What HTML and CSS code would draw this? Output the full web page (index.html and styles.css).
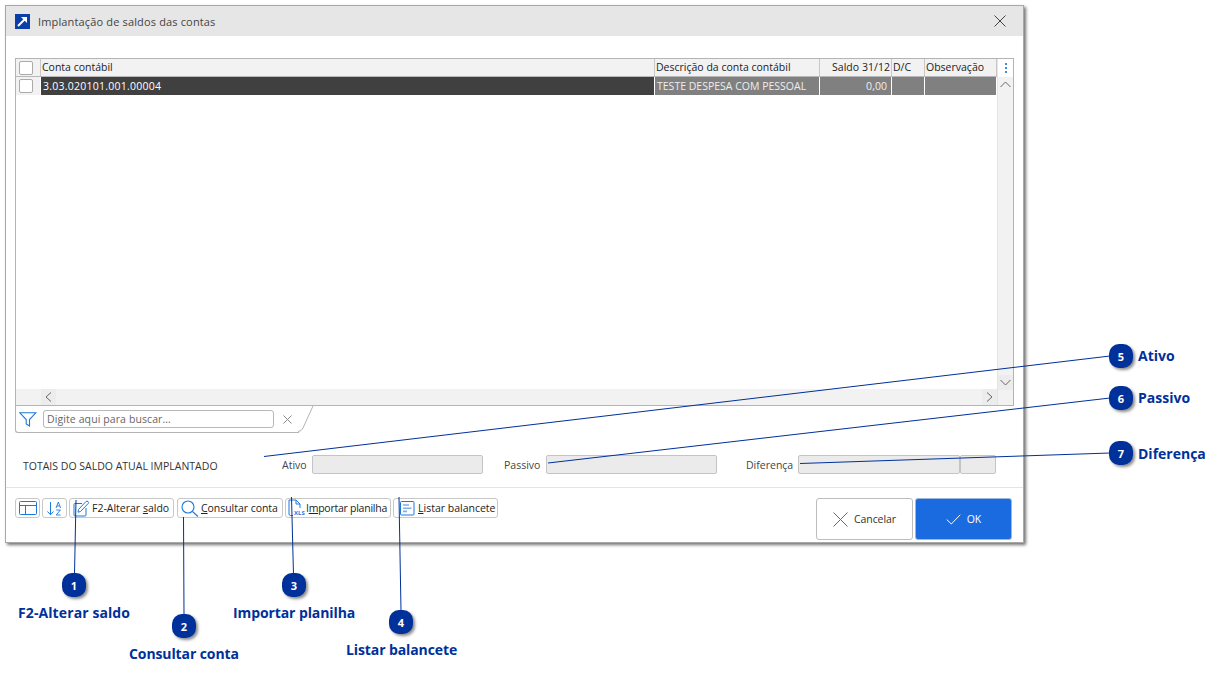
FILE: index.html
```html
<!DOCTYPE html>
<html lang="pt-BR">
<head>
<meta charset="utf-8">
<title>Implantação de saldos das contas</title>
<link rel="stylesheet" href="styles.css">
</head>
<body>
<div class="stage">
  <section class="dialog">
    <header class="titlebar">
      <svg class="app-icon" width="15" height="15" viewBox="0 0 15 15"><rect width="15" height="15" fill="#0a3ea8"/><path d="M3 12 L10 5" stroke="#fff" stroke-width="2" fill="none"/><path d="M6 3 H12 V9 Z" fill="#fff"/></svg>
      <span class="title">Implantação de saldos das contas</span>
      <svg class="close" width="12" height="12" viewBox="0 0 12 12"><path d="M.5 .5 L11.5 11.5 M11.5 .5 L.5 11.5" stroke="#444" stroke-width="1" fill="none"/></svg>
    </header>

    <div class="grid">
      <div class="grid-main">
        <div class="table">
          <div class="row head">
            <div class="cell c-check"><span class="box"></span></div>
            <div class="cell c-conta">Conta contábil</div>
            <div class="cell c-desc">Descrição da conta contábil</div>
            <div class="cell c-saldo">Saldo 31/12</div>
            <div class="cell c-dc">D/C</div>
            <div class="cell c-obs">Observação</div>
          </div>
          <div class="row body-row">
            <div class="cell c-check"><span class="box"></span></div>
            <div class="cell c-conta selected">3.03.020101.001.00004</div>
            <div class="cell c-desc muted">TESTE DESPESA COM PESSOAL</div>
            <div class="cell c-saldo muted num">0,00</div>
            <div class="cell c-dc muted"></div>
            <div class="cell c-obs muted"></div>
          </div>
          <div class="table-fill"></div>
          <div class="hscroll">
            <span class="h-btn left"><svg width="7" height="10" viewBox="0 0 7 10"><path d="M6 .5 L1 5 L6 9.5" stroke="#666" fill="none"/></svg></span>
            <span class="h-btn right"><svg width="7" height="10" viewBox="0 0 7 10"><path d="M1 .5 L6 5 L1 9.5" stroke="#666" fill="none"/></svg></span>
          </div>
        </div>
        <div class="vscroll">
          <div class="dots"><i></i><i></i><i></i></div>
          <span class="v-btn"><svg width="11" height="7" viewBox="0 0 11 7"><path d="M.5 6 L5.5 1 L10.5 6" stroke="#666" fill="none"/></svg></span>
          <span class="v-btn bottom"><svg width="11" height="7" viewBox="0 0 11 7"><path d="M.5 1 L5.5 6 L10.5 1" stroke="#666" fill="none"/></svg></span>
        </div>
      </div>
      <div class="searchbar">
        <div class="search-tab">
          <svg class="funnel" width="18" height="15" viewBox="0 0 18 15"><path d="M.8 .8 H16.8 L10.5 7.5 V14 L7.2 12 V7.5 Z" stroke="#1e78dc" stroke-width="1.1" fill="none"/></svg>
          <div class="search-input">Digite aqui para buscar…</div>
          <svg class="clear" width="9" height="9" viewBox="0 0 9 9"><path d="M.5 .5 L8.5 8.5 M8.5 .5 L.5 8.5" stroke="#888" fill="none"/></svg>
          <svg class="tab-edge" width="16" height="26" viewBox="0 0 16 26"><path d="M15 0 L5 22 Q3.5 25.5 0 25.5" stroke="#b4b4b4" fill="#fff"/></svg>
        </div>
      </div>
    </div>

    <div class="totals">
      <span class="totals-title">TOTAIS DO SALDO ATUAL IMPLANTADO</span>
      <label class="field-label l-ativo">Ativo</label>
      <div class="field f-ativo"></div>
      <label class="field-label l-passivo">Passivo</label>
      <div class="field f-passivo"></div>
      <label class="field-label l-dif">Diferença</label>
      <div class="field f-dif"></div>
      <div class="field f-dc"></div>
    </div>

    <footer class="footer">
      <div class="tools">
        <button class="tool icon-only"><svg width="18" height="14" viewBox="0 0 18 14"><rect x=".5" y=".5" width="17" height="13" rx="1" stroke="#1e78dc" fill="none"/><path d="M.5 4.500 H17.500 M6.500 4.500 V13.500" stroke="#1e78dc" fill="none"/></svg></button>
        <button class="tool icon-only"><svg width="18" height="15" viewBox="0 0 18 15"><path d="M4.500 1 V13.500 M1.500 10.500 L4.500 13.800 L7.500 10.500" stroke="#1e78dc" fill="none"/><path d="M10 7 L12.300 1 L14.600 7 M10.900 5 H13.700" stroke="#1e78dc" stroke-width=".9" fill="none"/><path d="M10.200 9 H14.400 L10.200 14 H14.600" stroke="#1e78dc" stroke-width=".9" fill="none"/></svg></button>
        <button class="tool t-f2"><svg width="17" height="17" viewBox="0 0 17 17"><path d="M9 3.500 H2 Q1 3.500 1 4.500 V15 Q1 16 2 16 H12 Q13 16 13 15 V8" stroke="#1e78dc" fill="none"/><path d="M5.500 9.500 L13 1.500 Q14 .7 15 1.500 Q16 2.500 15.200 3.500 L7.500 11.500 L5 12.200 Z" stroke="#1e78dc" fill="none"/></svg><span>F2-Alterar <u>s</u>aldo</span></button>
        <button class="tool t-consult"><svg width="18" height="17" viewBox="0 0 18 17"><circle cx="7" cy="7" r="6" stroke="#1e78dc" stroke-width="1.1" fill="none"/><path d="M11.500 11.500 L17 16.500" stroke="#1e78dc" stroke-width="1.1"/></svg><span><u>C</u>onsultar conta</span></button>
        <button class="tool t-import"><svg width="13" height="18" viewBox="0 0 13 18"><path d="M1 15 V1 H8 L12 5 V9 M8 1 V5 H12" stroke="#1e78dc" fill="none"/><path d="M1 15 Q1 16.500 2.500 16.500 H5" stroke="#1e78dc" fill="none"/></svg><span class="xls">XLS</span><span class="import-text">I<u>m</u>portar planilha</span></button>
        <button class="tool t-list"><svg width="15" height="15" viewBox="0 0 15 15"><rect x=".5" y=".5" width="13.500" height="13.500" rx="1" stroke="#1e78dc" fill="none"/><path d="M3 4 H9 M3 7.200 H11.500 M3 10.400 H7" stroke="#7fb0ea" stroke-width="1.600"/></svg><span><u>L</u>istar balancete</span></button>
      </div>
      <div class="actions">
        <button class="action cancel"><svg width="15" height="15" viewBox="0 0 15 15"><path d="M.5 .5 L14.500 14.500 M14.500 .5 L.5 14.500" stroke="#1e78dc" fill="none"/></svg>Cancelar</button>
        <button class="action ok"><svg width="15" height="11" viewBox="0 0 15 11"><path d="M.7 5.500 L5.300 10 L14.300 .7" stroke="#fff" fill="none"/></svg>OK</button>
      </div>
    </footer>
  </section>

  <svg class="leaders" width="1222" height="680" viewBox="0 0 1222 680">
    <g stroke="#00309a" stroke-width="1" fill="none">
      <path d="M76 500 L74.500 574"/>
      <path d="M183.500 517 L184 615"/>
      <path d="M291.500 497 L293.500 575"/>
      <path d="M399 497 L401 611"/>
      <path d="M264 456.500 L1110 356"/>
      <path d="M548 463 L1110 398"/>
      <path d="M800 463.500 L1110 453"/>
    </g>
  </svg>

  <span class="badge b1">1</span><span class="callout t1">F2-Alterar saldo</span>
  <span class="badge b2">2</span><span class="callout t2">Consultar conta</span>
  <span class="badge b3">3</span><span class="callout t3">Importar planilha</span>
  <span class="badge b4">4</span><span class="callout t4">Listar balancete</span>
  <span class="badge b5">5</span><span class="callout t5">Ativo</span>
  <span class="badge b6">6</span><span class="callout t6">Passivo</span>
  <span class="badge b7">7</span><span class="callout t7">Diferença</span>
</div>
</body>
</html>
```

FILE: styles.css
```css
* { box-sizing: border-box; }
html, body { margin: 0; padding: 0; background: #fff; }
body { font-family: "Open Sans", "Noto Sans", "Liberation Sans", sans-serif; font-size: 10.5px; color: #222; }
svg { flex: none; }
.stage { position: relative; width: 1222px; height: 680px; overflow: hidden; padding: 5px 0 0 5px; }

.dialog { width: 1019px; height: 538px; background: #fff; border: 1px solid #a8a8a8; box-shadow: 2px 2px 3px rgba(0,0,0,.55); display: flex; flex-direction: column; }
.titlebar { height: 30px; flex: none; background: #e6e6e6; display: flex; align-items: center; padding: 0 17px 0 9px; }
.title { margin-left: 8px; flex: 1; font-size: 11px; color: #444; letter-spacing: .15px; }

.grid { margin: 22px 10px 0 9px; width: 999px; height: 375px; flex: none; display: flex; flex-direction: column; }
.grid-main { flex: 1; display: flex; border: 1px solid #b4b4b4; min-height: 0; }
.table { flex: 1; display: flex; flex-direction: column; min-width: 0; }
.row { display: flex; flex: none; }
.head { height: 18px; background: #f2f2f2; border-bottom: 1px solid #b8b8b8; }
.body-row { height: 18px; }
.cell { display: flex; align-items: center; padding: 0 1px; border-right: 1px solid #fff; white-space: nowrap; color: #222; }
.head .cell { border-right: 1px solid #c8c8c8; padding-bottom: 1px; }
.c-check { width: 25px; justify-content: flex-start; background: #f2f2f2; padding: 0 0 0 3px; }
.head .c-check { padding: 0 0 0 3px; }
.c-conta { width: 614px; }
.c-desc { width: 165px; }
.c-saldo { width: 72px; justify-content: flex-end; letter-spacing: .04px; }
.c-dc { width: 33px; }
.c-obs { flex: 1; }
.box { width: 14px; height: 14px; background: #fff; border: 1px solid #aaa; border-radius: 2px; }
.selected { background: #404040; color: #fff; padding-left: 2px; letter-spacing: .25px; }
.body-row .c-desc { padding-left: 2px; }
.muted { background: #808080; color: #eee; }
.num { padding-right: 4px; }
.table-fill { flex: 1; }
.hscroll { height: 16px; flex: none; background: #f2f2f2; display: flex; justify-content: space-between; padding: 0 0 0 25px; }
.h-btn { width: 15px; display: flex; align-items: center; justify-content: center; background: #ececec; }
.vscroll { width: 16px; flex: none; background: #f2f2f2; display: flex; flex-direction: column; border-left: 1px solid #e4e4e4; }
.dots { height: 18px; flex: none; background: #fff; display: flex; flex-direction: column; align-items: center; justify-content: center; gap: 2px; }
.dots i { width: 2px; height: 2px; background: #3f8be0; display: block; }
.v-btn { height: 15px; flex: none; display: flex; align-items: center; justify-content: center; background: #f2f2f2; }
.v-btn.bottom { margin-top: auto; margin-bottom: 15px; background: #ececec; }

.searchbar { height: 27px; flex: none; }
.search-tab { position: relative; width: 284px; height: 27px; border-left: 1px solid #b4b4b4; border-bottom: 1px solid #b4b4b4; border-bottom-left-radius: 3px; display: flex; align-items: center; padding-left: 3px; }
.search-input { margin-left: 6px; width: 231px; height: 18px; border: 1px solid #b8b8b8; border-radius: 3px; padding-left: 3px; color: #666; line-height: 16px; letter-spacing: .1px; }
.clear { margin-left: 9px; }
.tab-edge { position: absolute; right: -15px; top: 0; }

.totals { flex: none; height: 55px; display: flex; align-items: flex-start; padding: 22px 0 0 17px; position: relative; border-bottom: 1px solid #e4e4e4; }
.totals-title { width: 259px; padding-top: 4px; color: #333; white-space: nowrap; font-size: 10.5px; }
.field-label { color: #444; padding-top: 3px; white-space: nowrap; }
.field { height: 19px; background: #ebebeb; border: 1px solid #c4c4c4; border-radius: 2px; flex: none; }
.l-ativo { width: 30px; }
.f-ativo { width: 171px; }
.l-passivo { width: 42px; margin-left: 21px; }
.f-passivo { width: 171px; }
.l-dif { width: 52px; margin-left: 29px; }
.f-dif { width: 162px; }
.f-dc { width: 36px; }

.footer { flex: 1; display: flex; justify-content: space-between; align-items: flex-start; padding: 10px 11px 0 9px; }
.tools { display: flex; gap: 2px; }
.tool { height: 20px; flex: none; display: flex; align-items: center; gap: 2px; background: #fff; border: 1px solid #c8c8c8; border-radius: 3px; padding: 0 3px; font: inherit; color: #222; white-space: nowrap; }
.icon-only { width: 25px; justify-content: center; padding: 0; }
.t-f2 { width: 105px; }
.t-consult { width: 106px; margin-left: 1px; gap: 2px; letter-spacing: -.04px; }
.t-import { width: 106px; position: relative; gap: 5px; padding-left: 2px; }
.import-text { letter-spacing: -.25px; }
.t-list { width: 105px; gap: 3px; padding-left: 6px; }
.xls { position: absolute; left: 8px; top: 11px; font-size: 6px; font-weight: 700; color: #1e78dc; background: #fff; line-height: 7px; }
.actions { display: flex; gap: 2px; }
.action { width: 97px; height: 42px; display: flex; align-items: center; justify-content: center; gap: 6px; border-radius: 3px; font: inherit; }
.cancel { background: #fff; border: 1px solid #bdbdbd; color: #333; letter-spacing: -.05px; }
.ok { background: #1a6be0; border: 1px solid #9db8dc; color: #fff; }

.leaders { position: absolute; left: 0; top: 0; pointer-events: none; }
.badge { position: absolute; width: 24px; height: 24px; border-radius: 10px; background: #00309a; color: #fff; font-size: 11px; font-weight: 700; display: flex; align-items: center; justify-content: center; box-shadow: 2px 2px 3px rgba(0,0,0,.45); }
.b1 { left: 62px; top: 573px; }
.b2 { left: 172px; top: 614px; }
.b3 { left: 282px; top: 573px; }
.b4 { left: 389px; top: 610px; }
.b5 { left: 1109px; top: 344px; }
.b6 { left: 1109px; top: 386px; }
.b7 { left: 1109px; top: 441px; }
.callout { position: absolute; color: #00309a; font-size: 14px; font-weight: 700; line-height: 18px; white-space: nowrap; }
.t1 { left: 18px; top: 604px; letter-spacing: .1px; }
.t2 { left: 129px; top: 645px; letter-spacing: -.1px; }
.t3 { left: 233px; top: 604px; letter-spacing: -.1px; }
.t4 { left: 346px; top: 641px; letter-spacing: -.1px; }
.t5 { left: 1138px; top: 347px; }
.t6 { left: 1138px; top: 389px; }
.t7 { left: 1138px; top: 445px; }
```
